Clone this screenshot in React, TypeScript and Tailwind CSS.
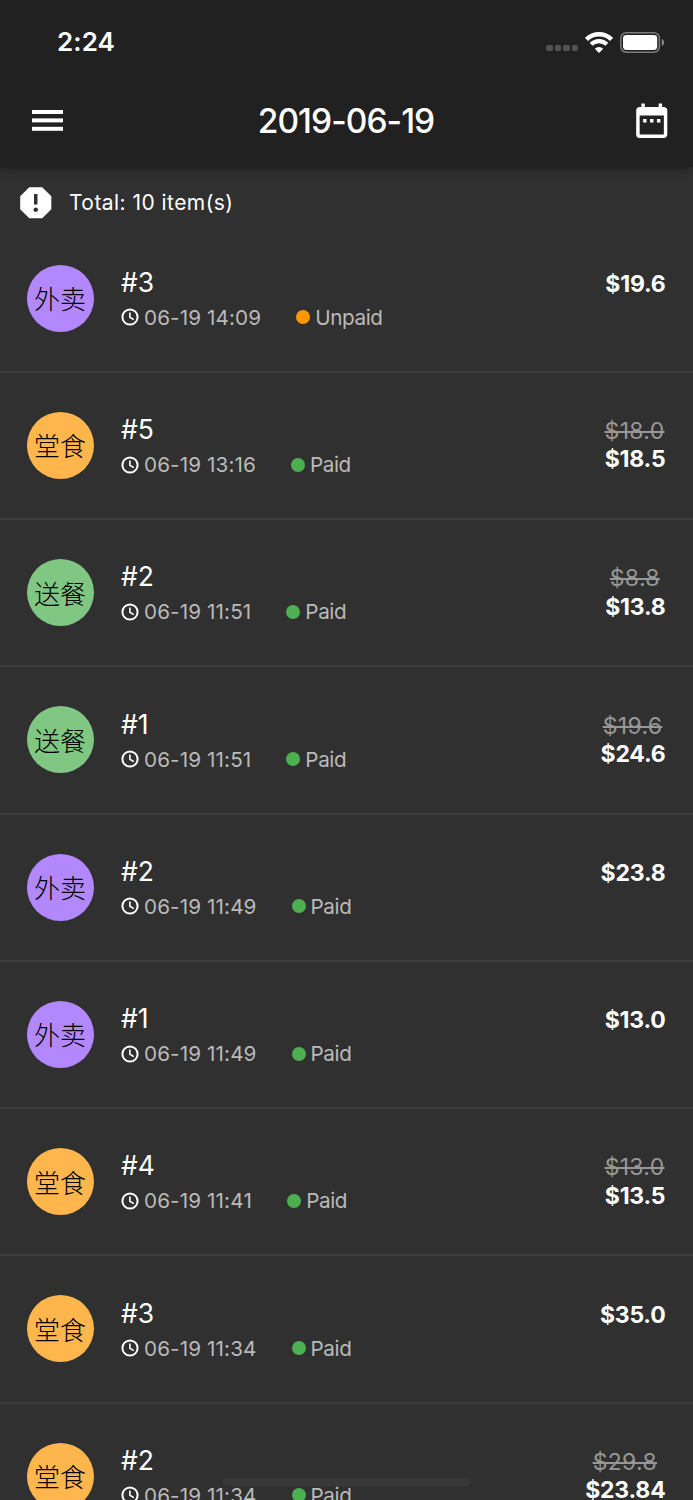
import React from "react";
import { MdDateRange, MdReport } from "react-icons/md";

type OrderType = "外卖" | "堂食" | "送餐";

type Order = {
  type: OrderType;
  number: string;
  time: string;
  paid: boolean;
  price: string;
  oldPrice?: string;
};

const orders: Order[] = [
  { type: "外卖", number: "#3", time: "06-19 14:09", paid: false, price: "$19.6" },
  { type: "堂食", number: "#5", time: "06-19 13:16", paid: true, price: "$18.5", oldPrice: "$18.0" },
  { type: "送餐", number: "#2", time: "06-19 11:51", paid: true, price: "$13.8", oldPrice: "$8.8" },
  { type: "送餐", number: "#1", time: "06-19 11:51", paid: true, price: "$24.6", oldPrice: "$19.6" },
  { type: "外卖", number: "#2", time: "06-19 11:49", paid: true, price: "$23.8" },
  { type: "外卖", number: "#1", time: "06-19 11:49", paid: true, price: "$13.0" },
  { type: "堂食", number: "#4", time: "06-19 11:41", paid: true, price: "$13.5", oldPrice: "$13.0" },
  { type: "堂食", number: "#3", time: "06-19 11:34", paid: true, price: "$35.0" },
  { type: "堂食", number: "#2", time: "06-19 11:34", paid: true, price: "$23.84", oldPrice: "$29.8" },
];

const avatarColors: Record<OrderType, string> = {
  外卖: "bg-[#b388ff]",
  堂食: "bg-[#ffb74d]",
  送餐: "bg-[#81c784]",
};

const MenuIcon = () => (
  <svg className="h-[21px] w-[31px]" viewBox="0 0 31 21" fill="#fff">
    <rect width="31" height="4" />
    <rect y="8.4" width="31" height="4" />
    <rect y="16.8" width="31" height="4" />
  </svg>
);

const ClockIcon = () => (
  <svg className="mr-[5px] size-[18px]" viewBox="0 0 18 18" fill="none" stroke="#fff">
    <circle cx="9" cy="9" r="7.600" strokeWidth="2" />
    <path d="M8.900 4.400v4.900l3.900 2.300" strokeWidth="1.600" />
  </svg>
);

const StatusBar = () => (
  <div className="flex h-[84px] items-center justify-between pl-[57px] pr-[29px]">
    <span className="text-[26px] font-semibold leading-none tracking-[0.1px]">2:24</span>
    <div className="flex items-center">
      <div className="mr-[7px] mt-[12px] flex gap-[2.3px]">
        {[0, 1, 2, 3].map((i) => (
          <span key={i} className="size-[6.2px] rounded-[2px] bg-[#535353]" />
        ))}
      </div>
      <svg className="mr-[7px] h-[21px] w-[28px]" viewBox="0 0 28 21" fill="none">
        <path d="M1.5 7.4a17.8 17.8 0 0 1 25 0" stroke="#fff" strokeWidth="4.4" />
        <path d="M6.1 12.3a11.3 11.3 0 0 1 15.8 0" stroke="#fff" strokeWidth="4.1" />
        <path d="M14 21l-4.2-4.3a5.9 5.9 0 0 1 8.4 0z" fill="#fff" />
      </svg>
      <svg className="h-[21px] w-[44px]" viewBox="0 0 44 21" fill="none">
        <rect x="0.8" y="0.8" width="38.6" height="19.4" rx="5.4" stroke="#7d7d7d" strokeWidth="1.5" />
        <rect x="3" y="3" width="34.2" height="15" rx="3.4" fill="#fff" />
        <path d="M41.8 7c1.6.6 2.3 2 2.3 3.5s-.7 2.9-2.3 3.5z" fill="#8a8a8a" />
      </svg>
    </div>
  </div>
);

const OrderRow = ({ order }: { order: Order }) => (
  <li className="flex h-[147.27px] items-start border-b-2 border-[#3b3b3b] pl-[27px] pr-[27.5px]">
    <div
      className={`mt-[39px] flex size-[67px] shrink-0 items-center justify-center rounded-full pr-px font-['Noto_Sans_CJK_SC',sans-serif] text-[26px] font-light leading-none text-black ${avatarColors[order.type]}`}
    >
      {order.type}
    </div>
    <div className="ml-[27px] mt-[39.3px] flex flex-col">
      <span className="text-[26.5px] leading-[34px]">{order.number}</span>
      <div className="flex h-[37px] items-center text-[20.7px] text-[#bababa]">
        <ClockIcon />
        <span className="tracking-[0.1px] [font-kerning:none]">{order.time}</span>
        <span
          className={`ml-[35px] mr-[5px] size-[14px] rounded-full ${order.paid ? "bg-[#4caf50]" : "bg-[#ff9800]"}`}
        />
        <span className="tracking-[-0.4px]">{order.paid ? "Paid" : "Unpaid"}</span>
      </div>
    </div>
    <div className="ml-auto mt-[44.3px] flex flex-col items-center leading-[28.4px]">
      {order.oldPrice && (
        <span className="mr-px text-[23px] tracking-[0.3px] text-[#979797] line-through decoration-2">
          {order.oldPrice}
        </span>
      )}
      <span className="text-[23px] font-bold tracking-[-0.2px]">{order.price}</span>
    </div>
  </li>
);

export default function App() {
  return (
    <div className="relative flex h-[1500px] w-[693px] flex-col overflow-hidden bg-[#303030] font-['Inter',sans-serif] text-white">
      <header className="z-10 h-[167px] shrink-0 bg-[#212121] shadow-[0_2px_8px_rgba(0,0,0,0.35)]">
        <StatusBar />
        <div className="grid h-[73px] grid-cols-[1fr_auto_1fr] items-center pl-[31.5px] pr-[20.5px]">
          <MenuIcon />
          <h1 className="mr-[12px] pt-[2px] text-[33.5px] font-medium leading-none tracking-[-0.95px]">2019-06-19</h1>
          <MdDateRange className="size-[41.5px] justify-self-end" />
        </div>
      </header>

      <div className="flex h-[58.5px] shrink-0 items-center pl-[14.5px] pt-[12px]">
        <MdReport className="size-[41.5px]" />
        <span className="ml-[13px] text-[21px] tracking-[0.45px]">Total: 10 item(s)</span>
      </div>

      {/* home indicator sits under the row text */}
      <div className="absolute bottom-[14px] left-[223px] h-[8px] w-[247px] rounded-full bg-[#383838]" />

      <ul className="relative">
        {orders.map((order, index) => (
          <OrderRow key={index} order={order} />
        ))}
      </ul>
    </div>
  );
}
